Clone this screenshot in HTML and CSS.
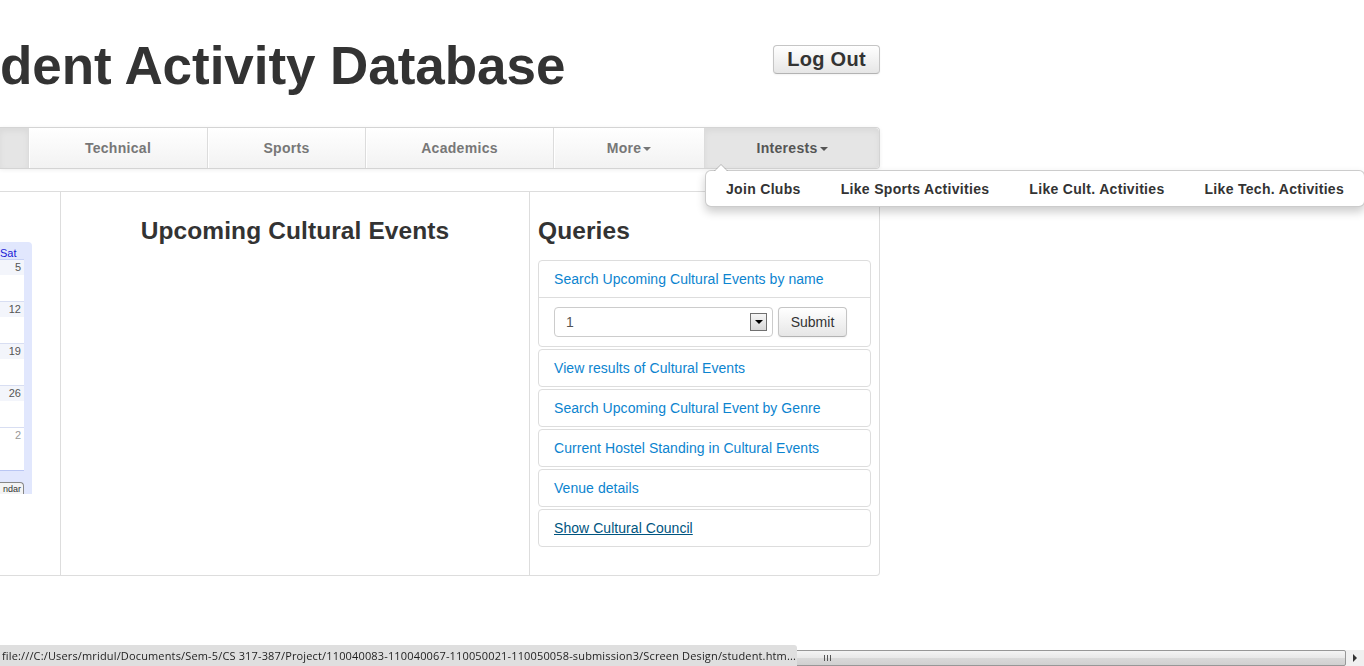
FILE: index.html
```html
<!DOCTYPE html>
<html lang="en">
<head>
<meta charset="utf-8">
<title>Student Activity Database</title>
<link rel="stylesheet" href="styles.css">
</head>
<body>
<div class="page">
  <header class="top">
    <h1 class="title">dent Activity Database</h1>
    <button class="btn btn-logout">Log Out</button>
  </header>

  <nav class="navbar">
    <ul class="nav">
      <li class="nav-item active"><a class="nav-link"></a></li>
      <li class="nav-item"><a class="nav-link">Technical</a></li>
      <li class="nav-item"><a class="nav-link">Sports</a></li>
      <li class="nav-item"><a class="nav-link">Academics</a></li>
      <li class="nav-item"><a class="nav-link">More<b class="caret"></b></a></li>
      <li class="nav-item open"><a class="nav-link">Interests<b class="caret"></b></a>
        <ul class="dropdown">
          <li><a class="dd-link">Join Clubs</a></li>
          <li><a class="dd-link">Like Sports Activities</a></li>
          <li><a class="dd-link">Like Cult. Activities</a></li>
          <li><a class="dd-link">Like Tech. Activities</a></li>
        </ul>
      </li>
    </ul>
  </nav>

  <main class="content">
    <section class="col col-cal">
      <div class="cal">
        <div class="cal-head">Sat</div>
        <div class="cal-body">
          <div class="cal-row"><span class="cal-num">5</span></div>
          <div class="cal-row"><span class="cal-num">12</span></div>
          <div class="cal-row"><span class="cal-num">19</span></div>
          <div class="cal-row"><span class="cal-num">26</span></div>
          <div class="cal-row"><span class="cal-num muted">2</span></div>
        </div>
        <div class="cal-foot"><span class="cal-btn">ndar</span></div>
      </div>
    </section>
    <section class="col col-events">
      <h3 class="heading center">Upcoming Cultural Events</h3>
    </section>
    <section class="col col-queries">
      <h3 class="heading">Queries</h3>
      <div class="panel">
        <div class="panel-head"><a class="qlink">Search Upcoming Cultural Events by name</a></div>
        <div class="panel-body">
          <div class="select"><span class="select-val">1</span><span class="select-arrow"></span></div>
          <button class="btn btn-submit">Submit</button>
        </div>
      </div>
      <div class="panel"><div class="panel-head"><a class="qlink">View results of Cultural Events</a></div></div>
      <div class="panel"><div class="panel-head"><a class="qlink">Search Upcoming Cultural Event by Genre</a></div></div>
      <div class="panel"><div class="panel-head"><a class="qlink">Current Hostel Standing in Cultural Events</a></div></div>
      <div class="panel"><div class="panel-head"><a class="qlink">Venue details</a></div></div>
      <div class="panel"><div class="panel-head"><a class="qlink visited">Show Cultural Council</a></div></div>
    </section>
  </main>
</div>

<div class="statusbar">file:///C:/Users/mridul/Documents/Sem-5/CS 317-387/Project/110040083-110040067-110050021-110050058-submission3/Screen Design/student.htm...</div>
<div class="hscroll">
  <div class="hscroll-thumb"><span class="grip"></span></div>
  <div class="hscroll-btn"><span class="arrow-right"></span></div>
</div>
</body>
</html>
```

FILE: styles.css
```css
html, body {
  margin: 0;
  padding: 0;
  background: #fff;
}
body {
  font-family: "Liberation Sans", Arial, sans-serif;
  font-size: 14px;
  color: #333;
  overflow: hidden;
}
.page {
  width: 880px;
}

/* header */
.top {
  display: flex;
  justify-content: space-between;
  align-items: flex-start;
  padding-top: 36px;
}
.title {
  margin: 0;
  font-size: 53px;
  line-height: 60px;
  font-weight: bold;
  letter-spacing: -0.05px;
  color: #333;
  white-space: nowrap;
}
.btn {
  font-family: "Liberation Sans", Arial, sans-serif;
  color: #333;
  background: linear-gradient(#ffffff, #e6e6e6);
  border: 1px solid #c5c5c5;
  border-bottom-color: #b3b3b3;
  border-radius: 4px;
  box-shadow: inset 0 1px 0 rgba(255,255,255,.2), 0 1px 2px rgba(0,0,0,.05);
  cursor: pointer;
}
.btn-logout {
  margin-top: 9px;
  width: 107px;
  height: 29px;
  padding: 0;
  font-size: 20px;
  font-weight: bold;
  letter-spacing: 0.3px;
  line-height: 27px;
}

/* navbar */
.navbar {
  margin-top: 31px;
  height: 40px;
  border: 1px solid #d4d4d4;
  border-left: none;
  border-radius: 0 4px 4px 0;
  background: linear-gradient(#ffffff, #f2f2f2);
  box-shadow: 0 1px 4px rgba(0,0,0,.065);
}
.nav {
  list-style: none;
  margin: 0;
  padding: 0;
  display: grid;
  grid-template-columns: 28px 179px 158px 188px 151px 175px;
  height: 40px;
}
.nav-item {
  position: relative;
  border-left: 1px solid #dcdcdc;
  box-shadow: inset 1px 0 0 #fff;
}
.nav-item:first-child {
  border-left: none;
}
.nav-link {
  display: flex;
  align-items: center;
  justify-content: center;
  height: 40px;
  font-weight: bold;
  font-size: 14px;
  letter-spacing: 0.3px;
  color: #777;
  text-decoration: none;
}
.nav-item.active,
.nav-item.open {
  background: #e5e5e5;
  box-shadow: inset 0 3px 6px rgba(0,0,0,.05);
}
.nav-item.open {
  border-radius: 0 4px 4px 0;
}
.nav-item.open .nav-link {
  color: #555;
}
.caret {
  display: inline-block;
  width: 0;
  height: 0;
  margin-left: 2px;
  margin-top: 1px;
  border-left: 4px solid transparent;
  border-right: 4px solid transparent;
  border-top: 4px solid #777;
}
.nav-item.open .caret {
  border-top-color: #555;
}

/* dropdown */
.dropdown {
  position: absolute;
  top: 42px;
  left: 0;
  z-index: 10;
  margin: 0;
  padding: 0;
  list-style: none;
  display: flex;
  height: 35px;
  align-items: center;
  background: #fff;
  border: 1px solid rgba(0,0,0,.2);
  border-radius: 6px;
  box-shadow: 0 5px 10px rgba(0,0,0,.2);
  white-space: nowrap;
}
.dropdown::before {
  content: "";
  position: absolute;
  top: -7px;
  left: 8px;
  border-left: 7px solid transparent;
  border-right: 7px solid transparent;
  border-bottom: 7px solid rgba(0,0,0,.2);
}
.dropdown::after {
  content: "";
  position: absolute;
  top: -6px;
  left: 9px;
  border-left: 6px solid transparent;
  border-right: 6px solid transparent;
  border-bottom: 6px solid #fff;
}
.dd-link {
  display: block;
  padding: 0 20px;
  font-weight: bold;
  font-size: 14px;
  letter-spacing: 0.31px;
  color: #333;
  line-height: 20px;
}

/* content */
.content {
  margin-top: 22px;
  display: grid;
  grid-template-columns: 61px 469px 349px;
  border: 1px solid #ddd;
  border-left: none;
  border-radius: 0 4px 4px 0;
}
.col {
  border-right: 1px solid #ddd;
  padding-top: 19px;
}
.col:last-child {
  border-right: none;
}
.col-queries {
  padding: 19px 8px 26px 8px;
}
.heading {
  margin: 0 0 9px;
  font-size: 24.5px;
  line-height: 40px;
  font-weight: bold;
  letter-spacing: 0.1px;
  color: #333;
}
.heading.center {
  text-align: center;
}

/* calendar fragment */
.col-cal {
  padding-top: 50px;
}
.cal {
  width: 32px;
  height: 252px;
  box-sizing: border-box;
  background: #e1e7fd;
  border-top-right-radius: 4px;
  padding-top: 5px;
  display: flex;
  flex-direction: column;
  overflow: hidden;
}
.cal-head {
  width: 24px;
  height: 12px;
  font-family: "Liberation Sans", Arial, sans-serif;
  font-size: 11px;
  line-height: 12px;
  color: #1a1ad6;
  border-bottom: 1px solid #c8d2f5;
}
.cal-body {
  width: 24px;
  background: #fff;
  border-bottom: 1px solid #b9c6f3;
}
.cal-row {
  height: 42px;
  border-bottom: 1px solid #d8def2;
  box-sizing: border-box;
  text-align: right;
}
.cal-row:last-child {
  border-bottom: none;
}
.cal-num {
  display: block;
  height: 15px;
  line-height: 15px;
  background: #f3f5fb;
  padding-right: 3px;
  font-size: 11px;
  color: #555;
}
.cal-num.muted {
  background: #fff;
  color: #999;
}
.cal-foot {
  margin-top: auto;
  width: 24px;
}
.cal-btn {
  display: block;
  height: 12px;
  box-sizing: border-box;
  border: 1px solid #888;
  border-left: none;
  border-bottom: none;
  border-top-right-radius: 4px;
  background: #f4f4f4;
  font-size: 9px;
  line-height: 12px;
  color: #333;
  text-align: right;
  padding-right: 2px;
}

/* query panels */
.panel {
  border: 1px solid #ddd;
  border-radius: 4px;
  margin-bottom: 2px;
}
.panel-head {
  height: 36px;
  padding: 0 15px;
  display: flex;
  align-items: center;
}
.panel-body {
  border-top: 1px solid #ddd;
  padding: 9px 15px;
  display: flex;
  gap: 5px;
}
.qlink {
  color: #0c84cf;
  text-decoration: none;
  font-size: 14px;
  letter-spacing: 0.05px;
}
.qlink.visited {
  color: #005580;
  text-decoration: underline;
}
.select {
  width: 219px;
  height: 30px;
  box-sizing: border-box;
  border: 1px solid #ccc;
  border-radius: 4px;
  display: flex;
  align-items: center;
  justify-content: space-between;
  padding: 0 5px 0 11px;
  color: #555;
  font-size: 14px;
}
.select-arrow {
  width: 17px;
  height: 18px;
  box-sizing: border-box;
  border: 1px solid #707070;
  background: linear-gradient(#f6f6f6, #d8d8d8);
  display: flex;
  align-items: center;
  justify-content: center;
}
.select-arrow::before {
  content: "";
  border-left: 4px solid transparent;
  border-right: 4px solid transparent;
  border-top: 4px solid #000;
}
.btn-submit {
  width: 69px;
  height: 30px;
  padding: 0;
  font-size: 14px;
}

/* browser chrome: status bar + horizontal scrollbar */
.statusbar {
  position: fixed;
  left: 0;
  bottom: 0;
  z-index: 5;
  width: 797px;
  height: 21px;
  box-sizing: border-box;
  padding-left: 2px;
  background: #dfdfdf;
  border-top-right-radius: 3px;
  font-family: "Open Sans", "DejaVu Sans", sans-serif;
  font-size: 11px;
  letter-spacing: 0.15px;
  line-height: 22px;
  color: #1e1e1e;
  white-space: nowrap;
  overflow: hidden;
}
.hscroll {
  position: fixed;
  left: 0;
  right: 0;
  bottom: 0;
  height: 16px;
  display: flex;
  background: #f0f0f0;
}
.hscroll-thumb {
  flex: 1;
  box-sizing: border-box;
  border: 1px solid #979797;
  border-radius: 2px;
  background: linear-gradient(#f4f4f4, #e8e8e8 50%, #d9d9d9 51%, #d0d0d0);
  position: relative;
}
.grip {
  position: absolute;
  left: 823px;
  top: 4px;
  width: 7px;
  height: 6px;
  background: repeating-linear-gradient(90deg, #555 0 1px, transparent 1px 3px);
}
.hscroll-btn {
  width: 18px;
  display: flex;
  align-items: center;
  justify-content: center;
}
.arrow-right {
  width: 0;
  height: 0;
  border-top: 4px solid transparent;
  border-bottom: 4px solid transparent;
  border-left: 4px solid #333;
}
```
